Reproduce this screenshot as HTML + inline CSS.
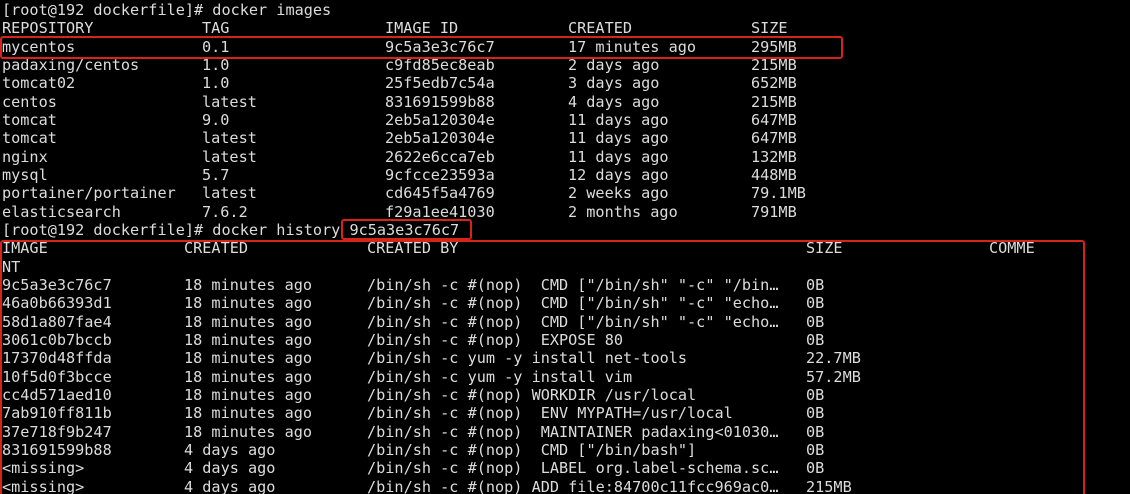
<!DOCTYPE html>
<html><head><meta charset="utf-8"><style>
html,body{margin:0;padding:0;background:#000;width:1130px;height:494px;overflow:hidden}
body{position:relative;font-family:"DejaVu Sans Mono","Liberation Mono",monospace;font-size:15.2px;color:#dcdcdc}
.r{position:absolute;left:0;height:18.33px;line-height:18.33px;white-space:pre;width:1130px}
.r span{position:absolute;top:0}
.a{left:2px}.b{left:202px}.c{left:385px}.d{left:568px}.e{left:751px}
.h1{left:184px}.h2{left:367px}.h3{left:806px}.h4{left:989px}
.box{position:absolute;border:2px solid #d8231c;border-radius:3px;box-sizing:border-box}
</style></head><body>
<div class="r" style="top:1px"><span class="a">[root@192 dockerfile]# docker images</span></div>
<div class="r" style="top:19.33px"><span class="a">REPOSITORY</span><span class="b">TAG</span><span class="c">IMAGE ID</span><span class="d">CREATED</span><span class="e">SIZE</span></div>
<div class="r" style="top:37.66px"><span class="a">mycentos</span><span class="b">0.1</span><span class="c">9c5a3e3c76c7</span><span class="d">17 minutes ago</span><span class="e">295MB</span></div>
<div class="r" style="top:56px"><span class="a">padaxing/centos</span><span class="b">1.0</span><span class="c">c9fd85ec8eab</span><span class="d">2 days ago</span><span class="e">215MB</span></div>
<div class="r" style="top:74.33px"><span class="a">tomcat02</span><span class="b">1.0</span><span class="c">25f5edb7c54a</span><span class="d">3 days ago</span><span class="e">652MB</span></div>
<div class="r" style="top:92.66px"><span class="a">centos</span><span class="b">latest</span><span class="c">831691599b88</span><span class="d">4 days ago</span><span class="e">215MB</span></div>
<div class="r" style="top:111px"><span class="a">tomcat</span><span class="b">9.0</span><span class="c">2eb5a120304e</span><span class="d">11 days ago</span><span class="e">647MB</span></div>
<div class="r" style="top:129.33px"><span class="a">tomcat</span><span class="b">latest</span><span class="c">2eb5a120304e</span><span class="d">11 days ago</span><span class="e">647MB</span></div>
<div class="r" style="top:147.66px"><span class="a">nginx</span><span class="b">latest</span><span class="c">2622e6cca7eb</span><span class="d">11 days ago</span><span class="e">132MB</span></div>
<div class="r" style="top:166px"><span class="a">mysql</span><span class="b">5.7</span><span class="c">9cfcce23593a</span><span class="d">12 days ago</span><span class="e">448MB</span></div>
<div class="r" style="top:184.33px"><span class="a">portainer/portainer</span><span class="b">latest</span><span class="c">cd645f5a4769</span><span class="d">2 weeks ago</span><span class="e">79.1MB</span></div>
<div class="r" style="top:202.66px"><span class="a">elasticsearch</span><span class="b">7.6.2</span><span class="c">f29a1ee41030</span><span class="d">2 months ago</span><span class="e">791MB</span></div>
<div class="r" style="top:221px"><span class="a">[root@192 dockerfile]# docker history 9c5a3e3c76c7</span></div>
<div class="r" style="top:239.33px"><span class="a">IMAGE</span><span class="h1">CREATED</span><span class="h2">CREATED BY</span><span class="h3">SIZE</span><span class="h4">COMME</span></div>
<div class="r" style="top:257.66px"><span class="a">NT</span></div>
<div class="r" style="top:276px"><span class="a">9c5a3e3c76c7</span><span class="h1">18 minutes ago</span><span class="h2">/bin/sh -c #(nop)  CMD ["/bin/sh" "-c" "/bin…</span><span class="h3">0B</span></div>
<div class="r" style="top:294.33px"><span class="a">46a0b66393d1</span><span class="h1">18 minutes ago</span><span class="h2">/bin/sh -c #(nop)  CMD ["/bin/sh" "-c" "echo…</span><span class="h3">0B</span></div>
<div class="r" style="top:312.66px"><span class="a">58d1a807fae4</span><span class="h1">18 minutes ago</span><span class="h2">/bin/sh -c #(nop)  CMD ["/bin/sh" "-c" "echo…</span><span class="h3">0B</span></div>
<div class="r" style="top:331px"><span class="a">3061c0b7bccb</span><span class="h1">18 minutes ago</span><span class="h2">/bin/sh -c #(nop)  EXPOSE 80</span><span class="h3">0B</span></div>
<div class="r" style="top:349.33px"><span class="a">17370d48ffda</span><span class="h1">18 minutes ago</span><span class="h2">/bin/sh -c yum -y install net-tools</span><span class="h3">22.7MB</span></div>
<div class="r" style="top:367.66px"><span class="a">10f5d0f3bcce</span><span class="h1">18 minutes ago</span><span class="h2">/bin/sh -c yum -y install vim</span><span class="h3">57.2MB</span></div>
<div class="r" style="top:386px"><span class="a">cc4d571aed10</span><span class="h1">18 minutes ago</span><span class="h2">/bin/sh -c #(nop) WORKDIR /usr/local</span><span class="h3">0B</span></div>
<div class="r" style="top:404.33px"><span class="a">7ab910ff811b</span><span class="h1">18 minutes ago</span><span class="h2">/bin/sh -c #(nop)  ENV MYPATH=/usr/local</span><span class="h3">0B</span></div>
<div class="r" style="top:422.66px"><span class="a">37e718f9b247</span><span class="h1">18 minutes ago</span><span class="h2">/bin/sh -c #(nop)  MAINTAINER padaxing&lt;01030…</span><span class="h3">0B</span></div>
<div class="r" style="top:441px"><span class="a">831691599b88</span><span class="h1">4 days ago</span><span class="h2">/bin/sh -c #(nop)  CMD ["/bin/bash"]</span><span class="h3">0B</span></div>
<div class="r" style="top:459.33px"><span class="a">&lt;missing&gt;</span><span class="h1">4 days ago</span><span class="h2">/bin/sh -c #(nop)  LABEL org.label-schema.sc…</span><span class="h3">0B</span></div>
<div class="r" style="top:477.66px"><span class="a">&lt;missing&gt;</span><span class="h1">4 days ago</span><span class="h2">/bin/sh -c #(nop) ADD file:84700c11fcc969ac0…</span><span class="h3">215MB</span></div>
<div class="box" style="left:0;top:36px;width:843px;height:23px"></div>
<div class="box" style="left:341px;top:219px;width:131px;height:21px"></div>
<div class="box" style="left:0;top:240px;width:1085px;height:260px"></div>
</body></html>
